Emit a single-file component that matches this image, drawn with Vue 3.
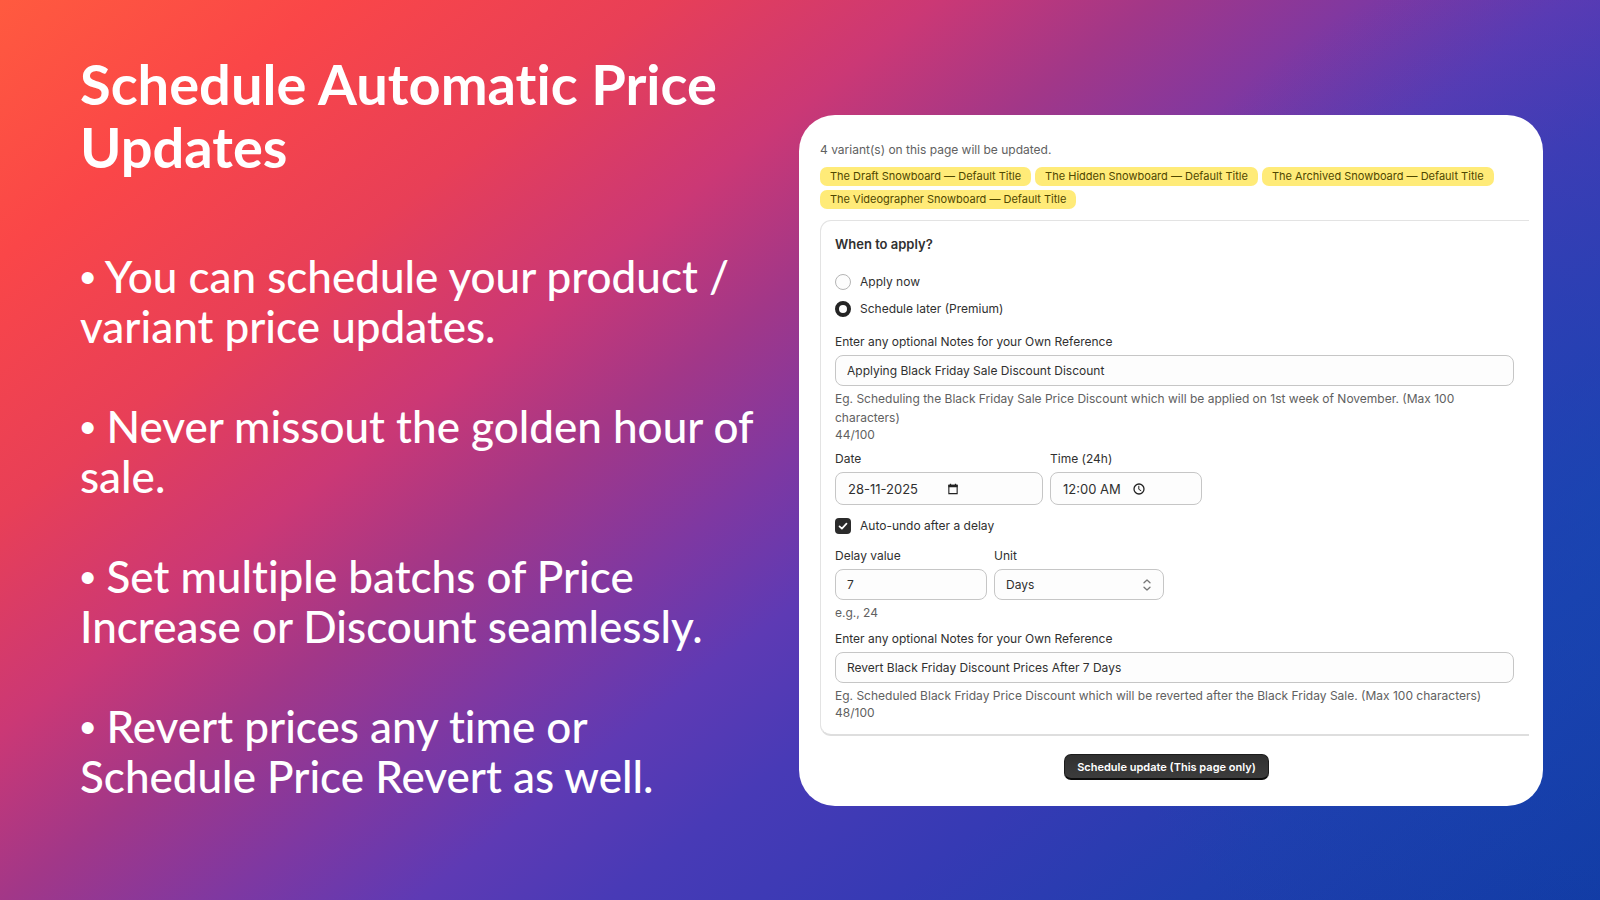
<script setup>
import { ref } from 'vue'

const bullets = [
  ['You can schedule your product /', 'variant price updates.'],
  ['Never missout the golden hour of', 'sale.'],
  ['Set multiple batchs of Price', 'Increase or Discount seamlessly.'],
  ['Revert prices any time or', 'Schedule Price Revert as well.'],
]
const variants = ['The Draft Snowboard', 'The Hidden Snowboard', 'The Archived Snowboard', 'The Videographer Snowboard']
const when = ref('later')
const applyNote = ref('Applying Black Friday Sale Discount Discount')
const date = ref('28-11-2025')
const time = ref('12:00 AM')
const autoUndo = ref(true)
const delay = ref('7')
const unit = ref('Days')
const revertNote = ref('Revert Black Friday Discount Prices After 7 Days')
</script>

<template>
  <main class="slide">
    <section class="copy">
      <h1>Schedule Automatic Price<br>Updates</h1>
      <p v-for="(lines, i) in bullets" :key="i"><span class="dot">•</span> {{ lines[0] }}<br>{{ lines[1] }}</p>
    </section>

    <form class="card" @submit.prevent>
      <p class="summary">4 variant(s) on this page will be updated.</p>
      <div class="tags">
        <span v-for="v in variants" :key="v" class="tag">{{ v }} — Default Title</span>
      </div>

      <section class="panel">
        <h2>When to apply?</h2>
        <label class="choice"><input v-model="when" type="radio" name="when" value="now">Apply now</label>
        <label class="choice"><input v-model="when" type="radio" name="when" value="later">Schedule later (Premium)</label>

        <div class="field first">
          <label for="apply-note">Enter any optional Notes for your Own Reference</label>
          <input id="apply-note" v-model="applyNote" type="text">
          <p class="help">Eg. Scheduling the Black Friday Sale Price Discount which will be applied on 1st week of November. (Max 100 characters)</p>
          <p class="count">44/100</p>
        </div>

        <div class="row">
          <div class="field date">
            <label for="date">Date</label>
            <div class="box">
              <input id="date" v-model="date" type="text">
              <svg class="calendar" viewBox="0 0 12 13" aria-hidden="true">
                <path d="M1.5 2.5h9v9h-9z" fill="none" stroke="#222" stroke-width="1.2" />
                <path d="M1 2h10v2.6H1zM2.6.8h1.4v2H2.6zM8 .8h1.4v2H8z" fill="#222" />
              </svg>
            </div>
          </div>
          <div class="field time">
            <label for="time">Time (24h)</label>
            <div class="box">
              <input id="time" v-model="time" type="text">
              <svg class="clock" viewBox="0 0 12 12" aria-hidden="true">
                <circle cx="6" cy="6" r="5" fill="none" stroke="#222" stroke-width="1.3" />
                <path d="M5.8 2.8v3.5l2.4 1.5" fill="none" stroke="#222" stroke-width="1" />
              </svg>
            </div>
          </div>
        </div>

        <label class="choice undo"><input v-model="autoUndo" type="checkbox">Auto-undo after a delay</label>

        <div class="row">
          <div class="field delay">
            <label for="delay">Delay value</label>
            <input id="delay" v-model="delay" type="text">
            <p class="help">e.g., 24</p>
          </div>
          <div class="field unit">
            <label for="unit">Unit</label>
            <div class="pick">
              <select id="unit" v-model="unit">
                <option>Days</option>
                <option>Hours</option>
              </select>
              <svg viewBox="0 0 8 12" aria-hidden="true">
                <path d="M1 3.8 4 1l3 2.8M1 8.2 4 11l3-2.8" fill="none" stroke="#777" stroke-width="1.3" stroke-linecap="round" stroke-linejoin="round" />
              </svg>
            </div>
          </div>
        </div>

        <div class="field last">
          <label for="revert-note">Enter any optional Notes for your Own Reference</label>
          <input id="revert-note" v-model="revertNote" type="text">
          <p class="help">Eg. Scheduled Black Friday Price Discount which will be reverted after the Black Friday Sale. (Max 100 characters)</p>
          <p class="count">48/100</p>
        </div>
      </section>

      <footer>
        <button type="submit">Schedule update (This page only)</button>
      </footer>
    </form>
  </main>
</template>

<style>
body { margin: 0; }
</style>

<style scoped>
* { box-sizing: border-box; }
h1, h2, p { margin: 0; }

.slide {
  min-height: 100vh;
  display: grid;
  grid-template-columns: minmax(0, 719fr) minmax(0, 744fr);
  align-items: start;
  padding: 0 57px 0 80px;
  background:
    radial-gradient(ellipse 34% 62% at 100% 56%, rgba(18, 72, 178, .6), rgba(18, 72, 178, 0)),
    linear-gradient(142deg, #ff5a3f 0%, #fa4648 12%, #e83f57 24%, #cb3875 34%, #a23788 42%, #7e38a2 50%, #5e3ab4 57%, #483ab6 64%, #363ab4 74%, #203eae 85%, #123aa3 100%);
}

.copy {
  padding-top: 52px;
  color: #fff;
  font-family: Lato, "Open Sans", sans-serif;
  font-variant-ligatures: none;
  white-space: nowrap;
}
h1 {
  margin-bottom: 73px;
  font-size: 56px;
  line-height: 63px;
  font-weight: 700;
}
.copy p {
  margin-bottom: 50px;
  font-size: 44px;
  line-height: 50px;
  font-weight: 500;
}
.dot { font-family: "Liberation Sans", sans-serif; line-height: 1; }

.card {
  margin-top: 115px;
  padding: 26px 14px 26px 21px;
  border-radius: 36px;
  background: #fff;
  color: #303030;
  font-family: Inter, "Noto Sans", sans-serif;
  font-size: 12px;
  line-height: 18px;
}
.summary { color: #616161; }
.tags {
  display: flex;
  flex-wrap: wrap;
  gap: 4px;
  margin-top: 8px;
}
.tag {
  padding: 0 10px;
  border-radius: 7px;
  background: #ffeb78;
  color: #4f4700;
  font-size: 11px;
  line-height: 19px;
}
.panel {
  margin-top: 11px;
  padding: 14px 15px 14px 14px;
  border: 1px solid #e3e3e3;
  border-right: 0;
  border-bottom: 2px solid #dedede;
  border-radius: 11px 0 0 11px;
}
h2 {
  margin-bottom: 15px;
  font-size: 13px;
  line-height: 18px;
  font-weight: 600;
}
.choice {
  display: flex;
  align-items: center;
  gap: 9px;
  height: 27px;
}
.choice input {
  appearance: none;
  width: 16px;
  height: 16px;
  margin: 0;
  border: 1px solid #b5b5b5;
  border-radius: 50%;
  background: #fdfdfd;
}
.choice input:checked { border: 4px solid #242424; }
.choice input[type="checkbox"] {
  border: 0;
  border-radius: 4px;
  background: #2b2b2b url("data:image/svg+xml,%3Csvg xmlns='http://www.w3.org/2000/svg' viewBox='0 0 16 16'%3E%3Cpath d='M4.5 8.3l2.4 2.4 4.6-5' fill='none' stroke='white' stroke-width='1.7' stroke-linecap='round' stroke-linejoin='round'/%3E%3C/svg%3E");
}
.undo { margin: 7px 0 8px; }

.field {
  display: flex;
  flex-direction: column;
}
.field label { margin-bottom: 4px; }
.field input, .field select, .box {
  width: 100%;
  height: 31px;
  padding: 0 11px;
  border: 1px solid #c6c6c6;
  border-radius: 8px;
  background: #fdfdfd;
  color: #303030;
  font: inherit;
}
.help { margin-top: 3px; line-height: 19px; color: #616161; }
.count { line-height: 15px; color: #616161; }
.first { margin: 11px 0 8px; }
.last { margin-top: 8px; }
.row { display: flex; gap: 7px; align-items: flex-start; }
.date { width: 208px; }
.time { width: 152px; }
.delay { width: 152px; }
.unit { width: 170px; }

.box {
  display: flex;
  align-items: center;
  height: 33px;
  padding: 0 12px;
}
.box input {
  height: 20px;
  padding: 0;
  border: 0;
  background: none;
  font-size: 13px;
}
.date .box input { width: 99px; }
.time .box input { width: 70px; }
.box svg { width: 12px; height: 12px; }

.pick { display: grid; align-items: center; }
.pick select { grid-area: 1 / 1; appearance: none; }
.pick svg {
  grid-area: 1 / 1;
  justify-self: end;
  width: 8px;
  height: 12px;
  margin-right: 13px;
  pointer-events: none;
}

footer {
  display: flex;
  justify-content: center;
  padding: 18px 16px 0 0;
}
button {
  height: 26px;
  padding: 0 12px;
  border: 1px solid #1c1c1c;
  border-bottom: 2px solid #0c0c0c;
  border-radius: 7px;
  background: linear-gradient(#303030, #3c3c3c);
  color: #fff;
  font: 600 11px/18px Inter, "Noto Sans", sans-serif;
}
</style>
